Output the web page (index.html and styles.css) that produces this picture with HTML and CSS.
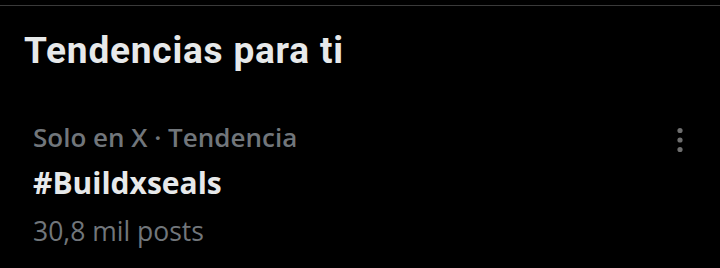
FILE: index.html
```html
<!DOCTYPE html>
<html lang="es">
<head>
  <meta charset="UTF-8" />
  <title>Tendencias para ti</title>
  <link rel="stylesheet" href="styles.css">
</head>
<body>
  <div class="panel">
    <h2 class="title">Tendencias para ti</h2>

    <div class="trend">
      <div class="trend-info">
        <div class="meta">Solo en X · Tendencia</div>
        <div class="tag">#Buildxseals</div>
        <div class="count">30,8 mil posts</div>
      </div>
      <button class="more" aria-label="Más opciones">
        <svg width="10" height="28" viewBox="0 0 10 28">
          <circle cx="5" cy="4.5" r="2.6" />
          <circle cx="5" cy="14" r="2.6" />
          <circle cx="5" cy="23.5" r="2.6" />
        </svg>
      </button>
    </div>
  </div>
</body>
</html>
```

FILE: styles.css
```css
body {
  margin: 0;
  background-color: #000;
  font-family: Roboto, "Liberation Sans", sans-serif;
  color: #e7e9ea;
}

.panel {
  border-top: 1px solid #3a3a3a;
  margin-top: 5px;
}

.title {
  margin: 0;
  padding: 22px 0 0 24px;
  font-size: 37px;
  font-weight: 700;
  letter-spacing: 0.8px;
  line-height: 46px;
  color: #e7e9ea;
}

.trend {
  display: flex;
  justify-content: space-between;
  align-items: flex-start;
  padding: 46px 35px 0 33px;
}

.trend-info {
  font-family: "Open Sans", sans-serif;
}

.meta {
  font-size: 26px;
  font-weight: 600;
  color: #71767b;
  line-height: 34px;
}

.tag {
  margin-top: 11px;
  font-size: 30px;
  font-weight: 700;
  line-height: 36px;
}

.count {
  margin-top: 13px;
  font-size: 26.5px;
  color: #71767b;
  line-height: 34px;
}

.more {
  background: none;
  border: 0;
  padding: 0;
  margin-top: 6px;
  cursor: pointer;
  fill: #6e6e6e;
}
```
